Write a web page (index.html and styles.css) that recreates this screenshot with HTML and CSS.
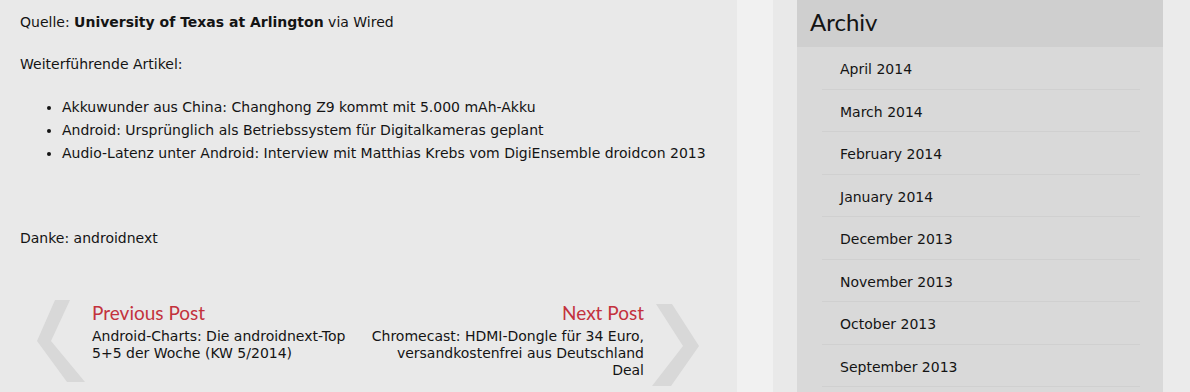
FILE: index.html
```html
<!DOCTYPE html>
<html lang="de">
<head>
<meta charset="utf-8">
<title>Artikel</title>
<link rel="stylesheet" href="styles.css">
</head>
<body>
<div class="page">
  <main class="main">
    <p class="para">Quelle: <strong>University of Texas at Arlington</strong> via Wired</p>
    <p class="para">Weiterführende Artikel:</p>
    <ul class="related">
      <li>Akkuwunder aus China: Changhong Z9 kommt mit 5.000 mAh-Akku</li>
      <li>Android: Ursprünglich als Betriebssystem für Digitalkameras geplant</li>
      <li>Audio-Latenz unter Android: Interview mit Matthias Krebs vom DigiEnsemble droidcon 2013</li>
    </ul>
    <p class="para thanks">Danke: androidnext</p>
    <nav class="postnav">
      <a class="nav-prev" href="#">
        <svg class="chev chev-left" width="48" height="82" viewBox="0 0 48 82"><polygon points="18,0 33,0 14,41 48,82 30,82 0,41" fill="#d8d8d8"/></svg>
        <span class="nav-text">
          <span class="nav-label">Previous Post</span>
          <span class="nav-title">Android-Charts: Die androidnext-Top 5+5 der Woche (KW 5/2014)</span>
        </span>
      </a>
      <a class="nav-next" href="#">
        <span class="nav-text right">
          <span class="nav-label">Next Post</span>
          <span class="nav-title">Chromecast: HDMI-Dongle für 34 Euro, versandkostenfrei aus Deutschland Deal</span>
        </span>
        <svg class="chev chev-right" width="48" height="82" viewBox="0 0 48 82"><polygon points="4,0 20,0 47,42 19,82 0,82 31,42" fill="#d8d8d8"/></svg>
      </a>
    </nav>
  </main>
  <div class="gutter"></div>
  <div class="gap"></div>
  <aside class="sidebar">
    <h2 class="widget-title">Archiv</h2>
    <ul class="archive">
      <li>April 2014</li>
      <li>March 2014</li>
      <li>February 2014</li>
      <li>January 2014</li>
      <li>December 2013</li>
      <li>November 2013</li>
      <li>October 2013</li>
      <li>September 2013</li>
    </ul>
  </aside>
</div>
</body>
</html>
```

FILE: styles.css
```css
html, body {
  margin: 0;
  padding: 0;
  background: #ebebeb;
  height: 392px;
  overflow: hidden;
}
body {
  font-family: "DejaVu Sans", Verdana, sans-serif;
  color: #141414;
}
.page {
  display: flex;
  height: 392px;
}
.main {
  width: 717px;
  padding: 12px 0 0 20px;
  background: #e9e9e9;
  font-size: 14px;
}
.para {
  margin: 0 0 22px;
  line-height: 20px;
}
.related {
  margin: -0.5px 0 0;
  padding: 0 0 0 42px;
  font-size: 14px;
  line-height: 23px;
}
.thanks {
  margin-top: 63.5px;
  margin-bottom: 52px;
}
.postnav {
  display: flex;
  justify-content: space-between;
  width: 663px;
  margin-left: 17px;
}
.postnav a {
  display: flex;
  align-items: flex-start;
  color: #141414;
  text-decoration: none;
}
.chev-left {
  margin-right: 7px;
}
.chev-right {
  margin: 4px 0 0 8px;
}
.nav-text {
  display: flex;
  flex-direction: column;
  width: 262px;
}
.nav-text.right {
  align-items: flex-end;
  text-align: right;
  width: 275px;
}
.nav-label {
  font-family: Lato, "Open Sans", sans-serif;
  font-size: 19px;
  line-height: 26px;
  color: #c3323d;
}
.nav-title {
  margin-top: 2px;
  font-size: 14px;
  line-height: 17px;
}
.gutter {
  width: 36px;
  background: #f1f1f1;
}
.gap {
  width: 24px;
  background: #e9e9e9;
}
.sidebar {
  width: 366px;
  background: #d9d9d9;
}
.widget-title {
  margin: 0;
  height: 47px;
  padding-left: 13px;
  background: #cfcfcf;
  font-family: Lato, "Open Sans", sans-serif;
  font-weight: normal;
  font-size: 24px;
  line-height: 44px;
  color: #141414;
}
.archive {
  list-style: none;
  margin: 0 23px 0 25px;
  padding: 0;
  font-size: 14px;
}
.archive li {
  padding: 12px 0 9.5px 18px;
  line-height: 20px;
  border-bottom: 1px solid #d0d0d0;
}
```
